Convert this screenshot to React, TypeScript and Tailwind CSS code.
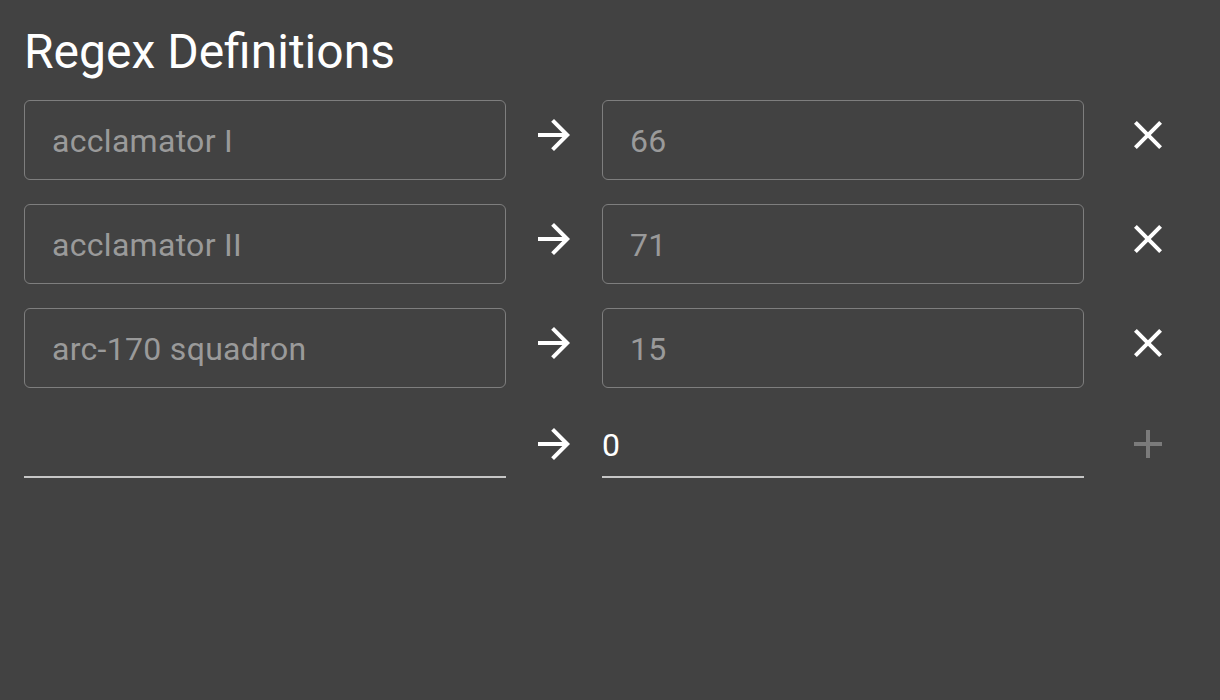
import React from "react";

const rows = [
  { pattern: "acclamator I", value: "66" },
  { pattern: "acclamator II", value: "71" },
  { pattern: "arc-170 squadron", value: "15" },
];

const ArrowIcon = () => (
  <svg viewBox="0 0 24 24" className="w-12 h-12 fill-white">
    <path d="M12 4l-1.41 1.41L16.17 11H4v2h12.17l-5.58 5.59L12 20l8-8z" />
  </svg>
);

const CloseIcon = () => (
  <svg viewBox="0 0 24 24" className="w-12 h-12 fill-white">
    <path d="M19 6.41L17.59 5 12 10.59 6.41 5 5 6.41 10.59 12 5 17.59 6.41 19 12 13.41 17.59 19 19 17.59 13.41 12z" />
  </svg>
);

const AddIcon = () => (
  <svg viewBox="0 0 24 24" className="w-12 h-12 fill-[#7b7b7b]">
    <path d="M19 13h-6v6h-2v-6H5v-2h6V5h2v6h6v2z" />
  </svg>
);

// read-only outlined field
const OutlinedField = ({ text }: { text: string }) => (
  <div className="w-[482px] h-20 border-[1.5px] border-[#7e7e7e] rounded-md pl-[27px] pt-[24px]">
    <span className="block text-[32px] leading-8 tracking-[0.00938em] text-[#9a9a9a]">{text}</span>
  </div>
);

const App: React.FC = () => {
  return (
    <div
      className="min-h-screen w-full bg-[#424242] px-6 pt-7"
      style={{ fontFamily: "Roboto, 'Liberation Sans', sans-serif" }}
    >
      <h1 className="text-[48px] leading-[48px] text-white font-normal">Regex Definitions</h1>

      <div className="mt-6 flex flex-col gap-6">
        {rows.map((row) => (
          <div key={row.pattern} className="flex items-start">
            <OutlinedField text={row.pattern} />
            <div className="ml-6 mt-[11px]">
              <ArrowIcon />
            </div>
            <div className="ml-6">
              <OutlinedField text={row.value} />
            </div>
            <button className="ml-10 mt-[11px]">
              <CloseIcon />
            </button>
          </div>
        ))}

        {/* new entry */}
        <div className="flex items-start">
          <div className="w-[482px] h-[66px] border-b-2 border-[#c6c6c6]" />
          <div className="ml-6 mt-2">
            <ArrowIcon />
          </div>
          <div className="ml-6 w-[482px] h-[66px] border-b-2 border-[#c6c6c6] flex items-end pb-[15px]">
            <span className="block text-[32px] leading-8 tracking-[0.00938em] text-white">0</span>
          </div>
          <button className="ml-10 mt-2">
            <AddIcon />
          </button>
        </div>
      </div>
    </div>
  );
};

export default App;
